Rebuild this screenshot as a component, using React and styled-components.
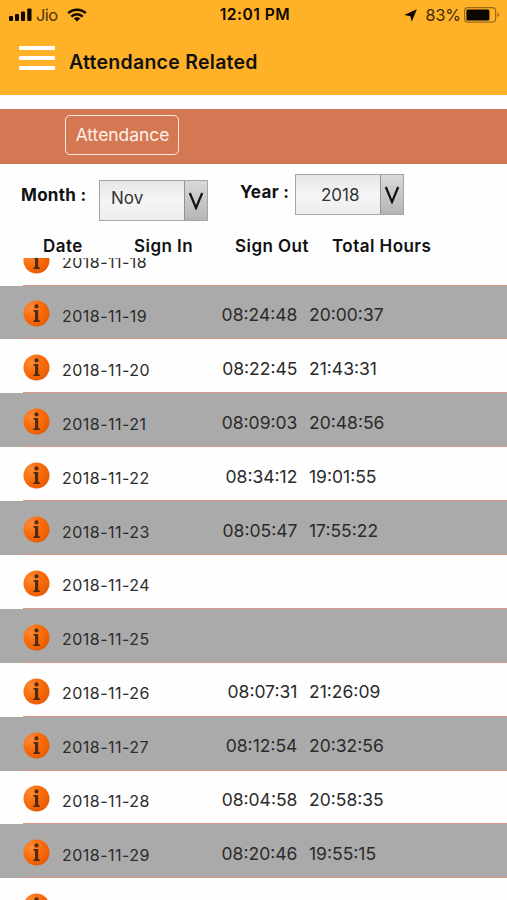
import styled, { createGlobalStyle } from "styled-components";

const GlobalStyle = createGlobalStyle`
    * {
        box-sizing: border-box;
    }

    body {
        margin: 0;
        background: #fff;
        font-family: Inter, "Liberation Sans", sans-serif;
        color: #111;
    }
`

const Screen = styled.div`
    width: 507px;
    height: 900px;
    overflow: hidden;
    display: flex;
    flex-direction: column;
    background: #fefefe;
`

const Header = styled.header`
    height: 95px;
    flex-shrink: 0;
    background: #ffb128;
`

const StatusBar = styled.div`
    height: 30px;
    display: grid;
    grid-template-columns: 1fr auto 1fr;
    align-items: center;
    padding: 0 7px 0 9px;
    color: #0d0700;
`

const StatusGroup = styled.div`
    display: flex;
    align-items: center;
    justify-content: ${props => props.$end ? "flex-end" : "flex-start"};
`

const Carrier = styled.span`
    font-size: 16.5px;
    line-height: 30px;
    letter-spacing: -0.6px;
    margin: 0 9px 0 4px;
    color: #50370c;
`

const Clock = styled.span`
    font-size: 15.6px;
    font-weight: 600;
    line-height: 30px;
    letter-spacing: 0.5px;
    margin-left: 1px;
`

const Battery = styled.span`
    font-size: 16px;
    line-height: 30px;
    margin: 0 3px 0 9px;
    color: #3f2a05;
`

const TitleBar = styled.div`
    display: flex;
    align-items: flex-start;
    padding: 16px 0 0 19px;
`

const MenuButton = styled.button`
    width: 36px;
    height: 24px;
    display: flex;
    flex-direction: column;
    justify-content: space-between;
    padding: 0;
    border: 0;
    background: none;
`

const MenuLine = styled.span`
    width: 36px;
    height: 4px;
    border-radius: 1px;
    background: #fff;
`

const Title = styled.h1`
    margin: 4px 0 0 14px;
    font-size: 19.5px;
    font-weight: 600;
    line-height: 24px;
    letter-spacing: 0.27px;
`

const TabBar = styled.nav`
    height: 55px;
    flex-shrink: 0;
    margin-top: 14px;
    padding: 6px 0 0 65px;
    background: #d47753;
`

const Tab = styled.button`
    width: 114px;
    height: 40px;
    padding: 0 0 1px 1px;
    border: 1.5px solid #ffe9de;
    border-radius: 5px;
    background: none;
    color: #fff0e8;
    font-family: inherit;
    font-size: 17.4px;
`

const Filters = styled.div`
    height: 70px;
    flex-shrink: 0;
    display: flex;
    align-items: flex-start;
    padding-left: 21px;
`

const FilterLabel = styled.label`
    width: ${props => props.$width}px;
    margin-top: ${props => props.$top}px;
    margin-left: ${props => props.$left || 0}px;
    font-size: 17px;
    font-weight: 700;
    line-height: 22px;
    letter-spacing: 0.3px;
    white-space: nowrap;
`

const Select = styled.div`
    width: 109px;
    height: 41px;
    margin-top: ${props => props.$top}px;
    display: flex;
    border: 1px solid #a5a5a5;
    background: linear-gradient(#e6e6e6, #f5f5f5 50%, #ededed);
`

const SelectValue = styled.span`
    flex: 1;
    padding-left: ${props => props.$indent}px;
    font-size: 17px;
    line-height: ${props => props.$line}px;
    color: #333;
`

const SelectArrow = styled.span`
    width: 23px;
    display: flex;
    align-items: center;
    justify-content: center;
    border-left: 1px solid #939393;
    background: linear-gradient(#d9d9d9, #b5b5b5);
`

const Columns = styled.div`
    height: 24px;
    flex-shrink: 0;
    display: grid;
    grid-template-columns: 91px 101px 97px 1fr;
    padding-left: 43px;
    font-size: 17px;
    font-weight: 600;
    line-height: 24px;
    letter-spacing: 0.45px;
    white-space: nowrap;
`

const List = styled.div`
    flex: 1;
    min-height: 0;
    overflow: hidden;
`

const Rows = styled.div`
    margin-top: -26.4px;
`

const Row = styled.div`
    height: 53.9px;
    display: grid;
    grid-template-columns: 39px 120px 116px 1fr;
    align-items: center;
    padding: 3px 0 0 23px;
    background: ${props => props.$shaded ? "#aaa" : "#fefefe"};
    background-image: linear-gradient(#d99a85, #d99a85);
    background-size: 100% 1px;
    background-position: 23px 100%;
    background-repeat: no-repeat;
`

const DateCell = styled.span`
    padding-top: 4px;
    font-size: 16px;
    line-height: 20px;
    letter-spacing: 0.47px;
    color: #2b2b2b;
    white-space: nowrap;
`

const TimeCell = styled.span`
    padding-top: 2px;
    padding-left: ${props => props.$right ? 0 : 11}px;
    padding-right: ${props => props.$right ? 0.6 : 0}px;
    text-align: ${props => props.$right ? "right" : "left"};
    font-size: 17.5px;
    line-height: 20px;
    color: #2b2b2b;
`

const days = [
    { date: "2018-11-18" },
    { date: "2018-11-19", signIn: "08:24:48", signOut: "20:00:37" },
    { date: "2018-11-20", signIn: "08:22:45", signOut: "21:43:31" },
    { date: "2018-11-21", signIn: "08:09:03", signOut: "20:48:56" },
    { date: "2018-11-22", signIn: "08:34:12", signOut: "19:01:55" },
    { date: "2018-11-23", signIn: "08:05:47", signOut: "17:55:22" },
    { date: "2018-11-24" },
    { date: "2018-11-25" },
    { date: "2018-11-26", signIn: "08:07:31", signOut: "21:26:09" },
    { date: "2018-11-27", signIn: "08:12:54", signOut: "20:32:56" },
    { date: "2018-11-28", signIn: "08:04:58", signOut: "20:58:35" },
    { date: "2018-11-29", signIn: "08:20:46", signOut: "19:55:15" },
    { date: "" },
]

function SignalIcon() {
    return (
        <svg width="23" height="14" viewBox="0 0 23 14" fill="currentColor">
            <rect x="0" y="8" width="4" height="5" rx="1" />
            <rect x="6" y="6" width="4" height="7" rx="1" />
            <rect x="12" y="3.5" width="4" height="9.5" rx="1" />
            <rect x="18.3" y="0.5" width="4.2" height="12.5" rx="1" />
        </svg>
    )
}

function WifiIcon() {
    return (
        <svg width="20" height="14" viewBox="0 0 20 14" fill="none" stroke="currentColor" strokeWidth="2.5">
            <path d="M1.2 5.2C6 .6 14 .6 18.8 5.2" />
            <path d="M4.3 8.6c3.2-3 8.2-3 11.4 0" />
            <path d="M10 13.6 6.8 10.5c1.8-1.6 4.6-1.6 6.4 0Z" fill="currentColor" stroke="none" />
        </svg>
    )
}

function LocationIcon() {
    return (
        <svg width="13" height="13" viewBox="0 0 13 13" fill="currentColor">
            <path d="M12.8.3 7.8 12.8 6.4 7.2.2 6.1Z" />
        </svg>
    )
}

function BatteryIcon() {
    return (
        <svg width="36" height="16" viewBox="0 0 36 16">
            <rect x="0.6" y="0.6" width="31" height="14.6" rx="3.5" fill="none" stroke="#9b6c1b" strokeWidth="1.2" />
            <rect x="2.4" y="2.4" width="23" height="11" rx="1.5" fill="#0d0700" />
            <path d="M33.3 5.3v5c2.3-.9 2.3-4.1 0-5Z" fill="#9b6c1b" />
        </svg>
    )
}

function ArrowIcon() {
    return (
        <svg width="16" height="18" viewBox="0 0 16 18" fill="none" stroke="#111" strokeWidth="2.2">
            <path d="M1.8 1 8 16 14.2 1" />
        </svg>
    )
}

function InfoIcon() {
    return (
        <svg width="27" height="27" viewBox="0 0 27 27">
            <defs>
                <radialGradient id="orb" cx="0.3" cy="0.3" r="0.8">
                    <stop offset="0" stopColor="#ff8b35" />
                    <stop offset="0.5" stopColor="#fa6c0c" />
                    <stop offset="1" stopColor="#e65a00" />
                </radialGradient>
            </defs>
            <circle cx="13.5" cy="13.5" r="13" fill="url(#orb)" />
            <circle cx="13.5" cy="6.4" r="2.1" fill="#4f2c10" />
            <path d="M10.4 10.1h4.8v10l1.7.6v1.2h-6.5v-1.2l1.6-.6v-8.2l-1.6-.6Z" fill="#4f2c10" />
        </svg>
    )
}

function App() {
    return (
        <Screen>
            <GlobalStyle />
            <Header>
                <StatusBar>
                    <StatusGroup>
                        <SignalIcon />
                        <Carrier>Jio</Carrier>
                        <WifiIcon />
                    </StatusGroup>
                    <Clock>12:01 PM</Clock>
                    <StatusGroup $end>
                        <LocationIcon />
                        <Battery>83%</Battery>
                        <BatteryIcon />
                    </StatusGroup>
                </StatusBar>
                <TitleBar>
                    <MenuButton>
                        <MenuLine />
                        <MenuLine />
                        <MenuLine />
                    </MenuButton>
                    <Title>Attendance Related</Title>
                </TitleBar>
            </Header>
            <TabBar>
                <Tab>Attendance</Tab>
            </TabBar>
            <Filters>
                <FilterLabel $width={78} $top={20}>Month :</FilterLabel>
                <Select $top={16}>
                    <SelectValue $indent={11} $line={35}>Nov</SelectValue>
                    <SelectArrow><ArrowIcon /></SelectArrow>
                </Select>
                <FilterLabel $width={55} $top={17} $left={32}>Year :</FilterLabel>
                <Select $top={10}>
                    <SelectValue $indent={25} $line={40}>2018</SelectValue>
                    <SelectArrow><ArrowIcon /></SelectArrow>
                </Select>
            </Filters>
            <Columns>
                <span>Date</span>
                <span>Sign In</span>
                <span>Sign Out</span>
                <span>Total Hours</span>
            </Columns>
            <List>
                <Rows>
                    {days.map((day, index) => (
                        <Row key={index} $shaded={index % 2 === 1}>
                            <InfoIcon />
                            <DateCell>{day.date}</DateCell>
                            <TimeCell $right>{day.signIn}</TimeCell>
                            <TimeCell>{day.signOut}</TimeCell>
                        </Row>
                    ))}
                </Rows>
            </List>
        </Screen>
    )
}

export default App
